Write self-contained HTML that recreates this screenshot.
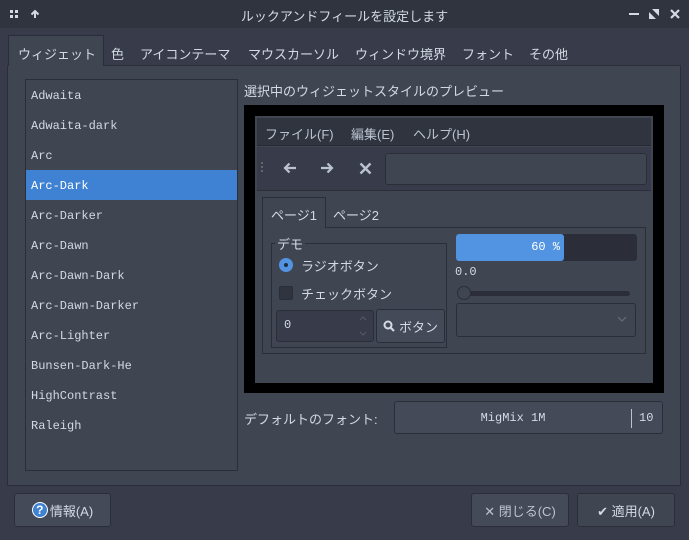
<!DOCTYPE html><html><head><style>
*{margin:0;padding:0;box-sizing:border-box}
body{width:689px;height:540px;background:#383c4a;font-family:"Liberation Sans","Noto Sans CJK JP",sans-serif;color:#d3dae3;font-size:13px;position:relative;overflow:hidden}
.a{position:absolute}
.mono{font-family:"Liberation Mono","Noto Sans CJK JP",monospace;font-size:12px}
.btn{position:absolute;background:#444a58;border:1px solid #2b2e39;border-radius:3px;display:flex;align-items:center;justify-content:center}
.t{font-size:13px;top:44px}
</style></head><body>
<div class="a" style="left:0;top:0;width:689px;height:28px;background:#2f343f"></div>
<div class="a" style="left:10px;top:10px;width:3px;height:3px;background:#d3dae3;box-shadow:5px 0 #d3dae3,0 5px #d3dae3,5px 5px #d3dae3"></div>
<svg class="a" style="left:30px;top:9px" width="10" height="10"><path d="M5 9V2M1.5 5.5L5 2l3.5 3.5" stroke="#d3dae3" stroke-width="2" fill="none"/></svg>
<div class="a" style="left:0;width:689px;top:6px;text-align:center;font-size:13px">ルックアンドフィールを設定します</div>
<div class="a" style="left:629px;top:13px;width:10px;height:2px;background:#d3dae3"></div>
<svg class="a" style="left:649px;top:9px" width="10" height="10"><path d="M3 0h7v7zM0 3v7h7z" fill="#d3dae3"/></svg>
<svg class="a" style="left:670px;top:9px" width="10" height="10"><path d="M1 1l8 8M9 1L1 9" stroke="#d3dae3" stroke-width="2.2"/></svg>
<!-- tabs -->
<div class="a" style="left:7px;top:65px;width:674px;height:421px;background:#404552;border:1px solid #2b2e39"></div>
<div class="a" style="left:8px;top:35px;width:96px;height:31px;background:#404552;border:1px solid #2b2e39;border-bottom:none"></div>
<div class="a t" style="left:18px">ウィジェット</div>
<div class="a t" style="left:111px">色</div>
<div class="a t" style="left:140px">アイコンテーマ</div>
<div class="a t" style="left:248px">マウスカーソル</div>
<div class="a t" style="left:355px">ウィンドウ境界</div>
<div class="a t" style="left:462px">フォント</div>
<div class="a t" style="left:529px">その他</div>
<!-- list -->
<div class="a mono" style="left:25px;top:79px;width:213px;height:392px;border:1px solid #2b2e39;background:#404552">
<div style="position:absolute;left:0;top:90px;width:211px;height:30px;background:#3f82d3"></div>
<div style="position:absolute;left:5px;top:1px;line-height:30px;color:#d3dae3">Adwaita<br>Adwaita-dark<br>Arc<br><span style="color:#fff">Arc-Dark</span><br>Arc-Darker<br>Arc-Dawn<br>Arc-Dawn-Dark<br>Arc-Dawn-Darker<br>Arc-Lighter<br>Bunsen-Dark-He<br>HighContrast<br>Raleigh</div>
</div>
<div class="a" style="left:244px;top:81px;font-size:13px">選択中のウィジェットスタイルのプレビュー</div>
<!-- preview -->
<div class="a" style="left:244px;top:105px;width:420px;height:288px;background:#000"></div>
<div class="a" style="left:255px;top:116px;width:398px;height:267px;background:#404552"></div>
<div class="a" style="left:257px;top:118px;width:394px;height:28px;background:#2f343f;border-bottom:1px solid #262a33"></div>
<div class="a" style="left:265px;top:124px;color:#bac3cf">ファイル(F)</div>
<div class="a" style="left:351px;top:124px;color:#bac3cf">編集(E)</div>
<div class="a" style="left:413px;top:124px;color:#bac3cf">ヘルプ(H)</div>
<div class="a" style="left:257px;top:147px;width:394px;height:44px;background:#383c4a;border-bottom:1px solid #2b2e39"></div>
<div class="a" style="left:261px;top:162px;width:2px;height:2px;background:#666;box-shadow:0 4px #666,0 8px #666"></div>
<svg class="a" style="left:283px;top:162px" width="14" height="12"><path d="M13 6H2M6.5 1.5L2 6l4.5 4.5" stroke="#bac3cf" stroke-width="2.2" fill="none"/></svg>
<svg class="a" style="left:320px;top:162px" width="14" height="12"><path d="M1 6h11M7.5 1.5L12 6l-4.5 4.5" stroke="#bac3cf" stroke-width="2.2" fill="none"/></svg>
<svg class="a" style="left:359px;top:162px" width="13" height="13"><path d="M1.5 1.5l10 10M11.5 1.5l-10 10" stroke="#bac3cf" stroke-width="2.4"/></svg>
<div class="a" style="left:385px;top:153px;width:262px;height:32px;background:#404552;border:1px solid #2b2e39;border-radius:3px"></div>
<div class="a" style="left:262px;top:227px;width:384px;height:127px;border:1px solid #2b2e39"></div>
<div class="a" style="left:262px;top:197px;width:64px;height:31px;background:#404552;border:1px solid #2b2e39;border-bottom:none"></div>
<div class="a" style="left:271px;top:205px">ページ1</div>
<div class="a" style="left:333px;top:205px">ページ2</div>
<div class="a" style="left:271px;top:243px;width:176px;height:105px;border:1px solid #2b2e39"></div>
<div class="a" style="left:275px;top:234px;background:#404552;padding:0 2px">デモ</div>
<div class="a" style="left:279px;top:258px;width:14px;height:14px;border-radius:50%;background:#5294e2"></div>
<div class="a" style="left:284px;top:263px;width:4px;height:4px;border-radius:50%;background:#1f2d3d"></div>
<div class="a" style="left:301px;top:256px">ラジオボタン</div>
<div class="a" style="left:279px;top:286px;width:14px;height:14px;background:#2f343f;border:1px solid #2b2e39;border-radius:2px"></div>
<div class="a" style="left:301px;top:284px">チェックボタン</div>
<div class="a" style="left:276px;top:310px;width:98px;height:32px;background:#383c4a;border:1px solid #2b2e39;border-radius:3px"></div>
<div class="a mono" style="left:284px;top:318px">0</div>
<svg class="a" style="left:358px;top:314px" width="10" height="24"><path d="M2 6l3-3 3 3M2 18l3 3 3-3" stroke="#555b68" fill="none"/></svg>
<div class="btn" style="left:376px;top:309px;width:69px;height:34px;color:#d3dae3"><svg width="12" height="12" style="margin-right:4px"><circle cx="5" cy="5" r="3.5" stroke="#d3dae3" stroke-width="2" fill="none"/><path d="M7.5 7.5l3.5 3.5" stroke="#d3dae3" stroke-width="2.2"/></svg>ボタン</div>
<div class="a" style="left:456px;top:234px;width:181px;height:27px;background:#2b2e39;border-radius:3px"></div>
<div class="a mono" style="left:456px;top:234px;width:108px;height:27px;background:#5294e2;border-radius:3px;text-align:right;padding-right:4px;line-height:27px;color:#fff">60 %</div>
<div class="a mono" style="left:455px;top:265px">0.0</div>
<div class="a" style="left:460px;top:291px;width:170px;height:5px;background:#2b2e39;border-radius:3px"></div>
<div class="a" style="left:457px;top:286px;width:14px;height:14px;border-radius:50%;background:#404552;border:1px solid #2b2e39"></div>
<div class="a" style="left:456px;top:303px;width:180px;height:34px;border:1px solid #2b2e39;border-radius:3px"></div>
<svg class="a" style="left:617px;top:316px" width="10" height="6"><path d="M1 1l4 4 4-4" stroke="#666d7a" fill="none" stroke-width="1.2"/></svg>
<!-- font -->
<div class="a" style="left:244px;top:409px">デフォルトのフォント:</div>
<div class="btn mono" style="left:394px;top:401px;width:269px;height:33px;justify-content:flex-start"><span style="position:absolute;left:0;width:236px;text-align:center">MigMix 1M</span><span style="position:absolute;left:236px;top:7px;height:19px;border-left:1px solid #bac3cf"></span><span style="position:absolute;left:244px">10</span></div>
<!-- bottom -->
<div class="btn" style="left:14px;top:493px;width:97px;height:34px"><span style="display:inline-flex;width:16px;height:16px;border-radius:50%;background:#3f82d3;color:#fff;font-weight:bold;font-size:12px;align-items:center;justify-content:center;border:1px solid #fff;margin-right:2px">?</span>情報(A)</div>
<div class="btn" style="left:471px;top:493px;width:98px;height:34px;color:#bac3cf">✕ 閉じる(C)</div>
<div class="btn" style="left:577px;top:493px;width:98px;height:34px;background:#404552">✔ 適用(A)</div>
</body></html>
